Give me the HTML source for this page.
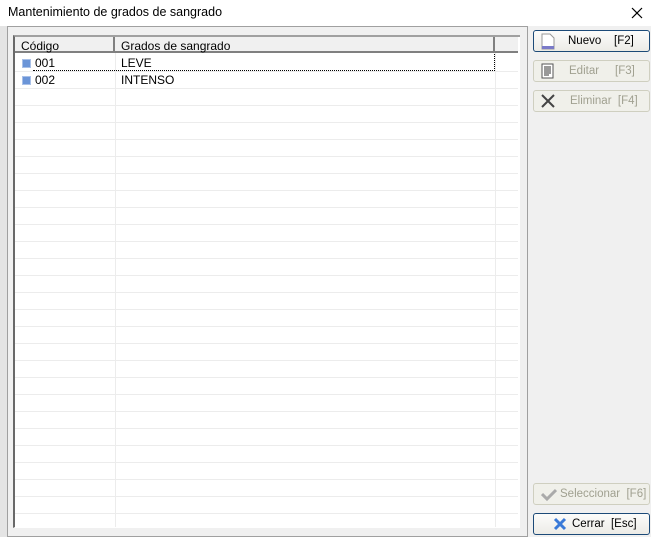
<!DOCTYPE html>
<html><head><style>
*{margin:0;padding:0;box-sizing:border-box}
body{width:651px;height:537px;background:#f0f0f0;font-family:"Liberation Sans",sans-serif;font-size:12px;color:#000;position:relative;overflow:hidden}
.title{position:absolute;left:0;top:0;width:651px;height:26px;background:#fff}
.title span{position:absolute;left:8px;top:5px;font-size:12.5px}
.abs{position:absolute}
.panel{left:7px;top:26px;width:521px;height:511px;border:1px solid #a0a0a0;border-right-color:#a0a0a0;background:#f0f0f0}
.grid{left:13px;top:35px;width:507px;height:493px;background:#fff;border-left:2px solid #696969;border-top:2px solid #a0a0a0;border-bottom:1px solid #fff}
.hdr{left:15px;top:37px;width:503px;height:16px;background:#f0f0f0;border-bottom:2px solid #808080}
.hl{top:37px;width:2px;height:16px;background:#808080}
.row{left:15px;width:503px;height:1px;background:#ececec}
.vl{top:53px;width:1px;height:474px;background:#ececec}
.btn{position:absolute;left:533px;width:117px;height:22px;border:1px solid #cfcfc0;border-radius:3px;background:#f0f0ea;color:#a0a090;font-size:11.5px;white-space:nowrap;overflow:hidden}
.btn.on{border-color:#1c4a78;background:linear-gradient(#fcfcfb,#ecebe6);color:#000}
.btn span{position:absolute;top:4px}
.ic{position:absolute;left:22px;width:9px;height:9px;background:#6b95d8;border:1px solid #a8c0e8}
</style></head><body>
<div class="title"><span>Mantenimiento de grados de sangrado</span>
<svg class="abs" style="left:631px;top:7px" width="12" height="12"><path d="M1 1L11 11M11 1L1 11" stroke="#000" stroke-width="1.2"/></svg></div>
<div class="abs" style="left:0;top:26px;width:8px;height:511px;background:#e4e4e4;border-right:1px solid #c8c8c8"></div>
<div class="abs panel"></div>
<div class="abs grid"></div>
<div class="abs hdr"></div>
<div class="abs hl" style="left:113px"></div>
<div class="abs hl" style="left:493px"></div>
<div class="abs" style="left:21px;top:39px">Código</div>
<div class="abs" style="left:121px;top:39px">Grados de sangrado</div>
<div class="abs vl" style="left:115px"></div>
<div class="abs vl" style="left:495px"></div>
<div id="rows"></div>
<div class="abs" style="left:33px;top:54px;width:462px;height:17px;border:1px dotted #000;border-left:none;border-top:none"></div>
<div class="ic" style="top:59px"></div><div class="abs" style="left:35px;top:56px">001</div><div class="abs" style="left:121px;top:56px">LEVE</div>
<div class="ic" style="top:76px"></div><div class="abs" style="left:35px;top:73px">002</div><div class="abs" style="left:121px;top:73px">INTENSO</div>
<script>
var h='';for(var y=71;y<527;y+=17)h+='<div class="abs row" style="top:'+y+'px"></div>';document.getElementById('rows').innerHTML=h;
</script>
<div class="btn on" style="top:30px"><svg class="abs" style="left:7px;top:2px" width="14" height="17"><path d="M1 1H9L13 5V16H1Z" fill="#fff" stroke="#999"/><path d="M1 13H13V16H1Z" fill="#7a7ac8"/></svg><span style="left:34px">Nuevo&nbsp;&nbsp;&nbsp;&nbsp;[F2]</span></div>
<div class="btn" style="top:60px"><svg class="abs" style="left:7px;top:2px" width="13" height="16"><rect x="1" y="1" width="11" height="14" fill="#fff" stroke="#555"/><path d="M3 4H10M3 6H10M3 8H10M3 10H10M3 12H8" stroke="#333"/></svg><span style="left:35px">Editar&nbsp;&nbsp;&nbsp;&nbsp;&nbsp;[F3]</span></div>
<div class="btn" style="top:90px"><svg class="abs" style="left:7px;top:3px" width="14" height="14"><path d="M1 1L13 13M13 1L1 13" stroke="#444" stroke-width="2"/></svg><span style="left:36px">Eliminar&nbsp;&nbsp;[F4]</span></div>
<div class="btn" style="top:483px"><svg class="abs" style="left:7px;top:4px" width="16" height="13"><path d="M1 6L6 11L15 2" stroke="#aaa" stroke-width="3" fill="none"/></svg><span style="left:26px">Seleccionar&nbsp;&nbsp;[F6]</span></div>
<div class="btn on" style="top:513px"><svg class="abs" style="left:19px;top:3px" width="14" height="14"><path d="M2 2L12 12M12 2L2 12" stroke="#3a7ad8" stroke-width="3"/></svg><span style="left:38px">Cerrar&nbsp;&nbsp;[Esc]</span></div>
</body></html>
